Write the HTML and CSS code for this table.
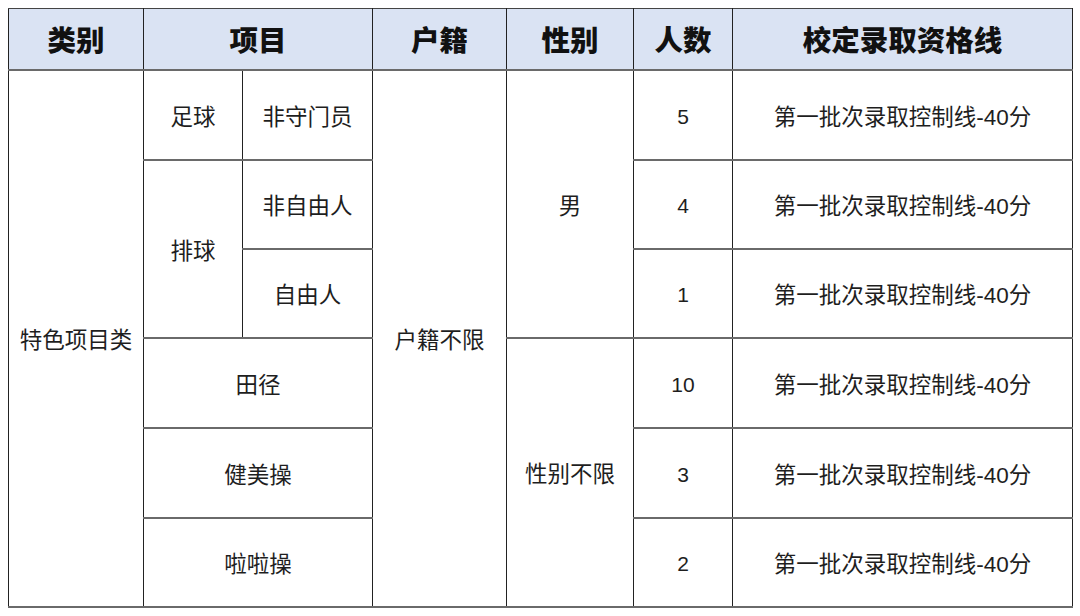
FILE: index.html
```html
<!DOCTYPE html>
<html lang="zh-CN">
<head>
<meta charset="utf-8">
<link rel="stylesheet" href="styles.css">
</head>
<body>
<table class="grid">
  <colgroup>
    <col class="c1"><col class="c2"><col class="c3"><col class="c4"><col class="c5"><col class="c6"><col class="c7">
  </colgroup>
  <thead>
    <tr class="head">
      <th>类别</th>
      <th colspan="2">项目</th>
      <th>户籍</th>
      <th>性别</th>
      <th>人数</th>
      <th>校定录取资格线</th>
    </tr>
  </thead>
  <tbody>
    <tr class="r1">
      <td rowspan="6">特色项目类</td>
      <td>足球</td>
      <td>非守门员</td>
      <td rowspan="6">户籍不限</td>
      <td rowspan="3">男</td>
      <td class="num">5</td>
      <td>第一批次录取控制线-40分</td>
    </tr>
    <tr class="r2">
      <td rowspan="2">排球</td>
      <td>非自由人</td>
      <td class="num">4</td>
      <td>第一批次录取控制线-40分</td>
    </tr>
    <tr class="r3">
      <td>自由人</td>
      <td class="num">1</td>
      <td>第一批次录取控制线-40分</td>
    </tr>
    <tr class="r4">
      <td colspan="2">田径</td>
      <td rowspan="3">性别不限</td>
      <td class="num">10</td>
      <td>第一批次录取控制线-40分</td>
    </tr>
    <tr class="r5">
      <td colspan="2">健美操</td>
      <td class="num">3</td>
      <td>第一批次录取控制线-40分</td>
    </tr>
    <tr class="r6">
      <td colspan="2">啦啦操</td>
      <td class="num">2</td>
      <td>第一批次录取控制线-40分</td>
    </tr>
  </tbody>
</table>
</body>
</html>
```

FILE: styles.css
```css
html, body {
  margin: 0;
  padding: 0;
  background: #ffffff;
}
body {
  padding: 8px;
  font-family: "Liberation Sans", "Noto Sans CJK SC", sans-serif;
  color: #1e1e1e;
}
.grid {
  border-collapse: collapse;
  table-layout: fixed;
  width: 1064px;
}
.c1 { width: 135px; }
.c2 { width: 99px; }
.c3 { width: 130px; }
.c4 { width: 134px; }
.c5 { width: 127px; }
.c6 { width: 99px; }
.c7 { width: 340px; }
.grid th, .grid td {
  border-left: 1px solid #222;
  border-right: 1px solid #222;
  border-top: 2px solid #6a6a6a;
  border-bottom: 2px solid #6a6a6a;
  padding: 0;
  text-align: center;
  vertical-align: middle;
}
.head {
  height: 61px;
  background: #dae3f3;
}
.head th {
  font-family: "Noto Sans CJK SC", sans-serif;
  font-size: 28.5px;
  font-weight: 900;
  color: #111;
  border-top: 1px solid #444;
}
.grid td {
  font-size: 22.5px;
}
.r1 td, .r4 td, .r5 td { height: 88px; }
.r2 td, .r3 td, .r6 td { height: 87px; }
.grid td.num {
  padding-top: 4px;
  font-size: 21px;
}
.r1 td.num, .r4 td.num, .r5 td.num { height: 84px; }
.r2 td.num, .r3 td.num, .r6 td.num { height: 83px; }
```
